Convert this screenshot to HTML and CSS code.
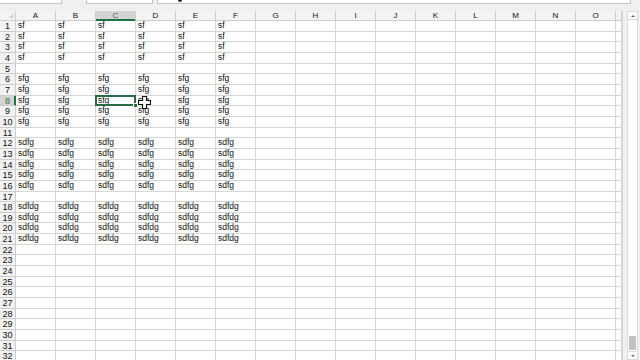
FILE: index.html
```html
<!DOCTYPE html>
<html>
<head>
<meta charset="utf-8">
<link rel="stylesheet" href="styles.css">
</head>
<body>
<div class="app">
  <div class="topbar">
    <div class="box b1"></div>
    <div class="box b2"></div>
    <div class="box b3"><span class="dot"></span></div>
  </div>
  <div class="main">
    <div class="sheet" id="sheet"></div>
    <div class="vscroll">
      <div class="arrow up"></div>
      <div class="track"><div class="thumb"></div></div>
      <div class="arrow down"></div>
    </div>
  </div>
</div>
<svg class="cursor" width="13" height="13" viewBox="0 0 13 13">
  <path d="M4.5 0.5 H8.5 V4.5 H12.5 V8.5 H8.5 V12.5 H4.5 V8.5 H0.5 V4.5 H4.5 Z" fill="#fff" stroke="#111" stroke-width="1.2"/>
</svg>
<script src="script.js"></script>
</body>
</html>
```
FILE: script.js
```js
(function(){
  var sheet = document.getElementById('sheet');
  var cols = 'ABCDEFGHIJKLMNO'.split('');
  function cell(cls, txt){
    var d = document.createElement('div');
    d.className = cls;
    if (txt) d.textContent = txt;
    sheet.appendChild(d);
    return d;
  }
  cell('corner hdr', '');
  cols.forEach(function(c){ cell('colhdr hdr' + (c==='C' ? ' sel' : ''), c); });
  cell('colhdr hdr', '');
  function val(r){
    if (r>=1 && r<=4) return 'sf';
    if (r>=6 && r<=10) return 'sfg';
    if (r>=12 && r<=16) return 'sdfg';
    if (r>=18 && r<=21) return 'sdfdg';
    return '';
  }
  for (var r=1; r<=32; r++){
    cell('rowhdr hdr' + (r===8 ? ' sel' : ''), String(r));
    for (var i=0; i<cols.length; i++){
      var t = i < 6 ? val(r) : '';
      cell('c' + (r===8 && i===2 ? ' active' : ''), t);
    }
    cell('c', '');
  }
})();
```
FILE: styles.css
```css
html, body {
  margin: 0;
  padding: 0;
  width: 640px;
  height: 360px;
  overflow: hidden;
  background: #f0f0f0;
  font-family: "Liberation Sans", Arial, sans-serif;
}
.app {
  display: flex;
  flex-direction: column;
  width: 640px;
  height: 360px;
}
.topbar {
  display: flex;
  height: 4px;
  padding-bottom: 7px;
  flex: 0 0 auto;
}
.box {
  background: #fff;
  height: 4px;
  border-bottom: 1px solid #c6c6c6;
  box-sizing: border-box;
  position: relative;
}
.b1 { width: 62px; border-right: 1px solid #c6c6c6; }
.b2 { width: 67px; margin-left: 24px; border-left: 1px solid #c6c6c6; border-right: 1px solid #c6c6c6; }
.b3 { width: 474px; margin-left: 4px; border-left: 1px solid #c6c6c6; border-right: 1px solid #c6c6c6; }
.dot {
  position: absolute;
  left: 20px;
  top: -2px;
  width: 4px;
  height: 4px;
  border-radius: 50%;
  background: #222;
}
.main {
  display: flex;
  flex: 1 1 auto;
  min-height: 0;
}
.sheet {
  display: grid;
  grid-template-columns: 16px repeat(15, 40px) 6px;
  grid-template-rows: 10px;
  grid-auto-rows: 10.67px;
  background: #fff;
  overflow: hidden;
  width: 622px;
}
.sheet > div {
  box-sizing: border-box;
  border-right: 1px solid #d6d6d6;
  border-bottom: 1px solid #d6d6d6;
  font-size: 8.5px;
  line-height: 9.5px;
  white-space: nowrap;
  overflow: visible;
  color: #111;
}
.c {
  padding-left: 2px;
}
.hdr {
  background: #f3f3f3;
  color: #555;
  text-align: center;
  border-color: #cdcdcd !important;
  overflow: hidden !important;
}
.colhdr {
  line-height: 10px !important;
  font-size: 8px !important;
}
.rowhdr {
  line-height: 11px !important;
  color: #444;
  font-size: 9px !important;
}
.corner {
  position: relative;
}
.corner::after {
  content: "";
  position: absolute;
  right: 2px;
  bottom: 2px;
  border-left: 4px solid transparent;
  border-bottom: 4px solid #c8c8c8;
}
.hdr.sel {
  background: #d4d4d4;
  color: #2f6b47;
}
.colhdr.sel {
  border-bottom: 1px solid #217346 !important;
  box-shadow: inset 0 -1px 0 #217346;
}
.rowhdr.sel {
  border-right: 1px solid #217346 !important;
  box-shadow: inset -1px 0 0 #217346;
}
.sheet > .active {
  position: relative;
}
.active::after {
  content: "";
  position: absolute;
  left: -1px;
  top: -1px;
  right: -1px;
  bottom: -1px;
  border: 2px solid #2a6a44;
  pointer-events: none;
}
.active::before {
  content: "";
  position: absolute;
  right: -3px;
  bottom: -3px;
  width: 5px;
  height: 5px;
  background: #217346;
  border: 1px solid #fff;
  box-sizing: border-box;
  z-index: 2;
}
.vscroll {
  width: 18px;
  display: flex;
  flex-direction: column;
  background: #f0f0f0;
  border-left: 1px solid #d8d8d8;
  box-sizing: border-box;
  padding: 0 2px 0 4px;
}
.arrow {
  height: 9px;
  position: relative;
  flex: 0 0 auto;
  background: #fff;
  border: 1px solid #dadada;
  box-sizing: border-box;
}
.arrow.up::after {
  content: "";
  position: absolute;
  left: 3px;
  top: 3px;
  border-left: 2px solid transparent;
  border-right: 2px solid transparent;
  border-bottom: 2px solid #666;
}
.arrow.down::after {
  content: "";
  position: absolute;
  left: 3px;
  top: 3px;
  border-left: 2px solid transparent;
  border-right: 2px solid transparent;
  border-top: 2px solid #666;
}
.track {
  flex: 1 1 auto;
  display: flex;
  flex-direction: column;
  justify-content: flex-end;
  background: #fff;
  border-left: 1px solid #dadada;
  border-right: 1px solid #dadada;
}
.thumb {
  height: 14px;
  background: #c2c2c2;
  margin: 0 1px 1px;
}
.cursor {
  position: absolute;
  left: 138px;
  top: 96px;
}
```
